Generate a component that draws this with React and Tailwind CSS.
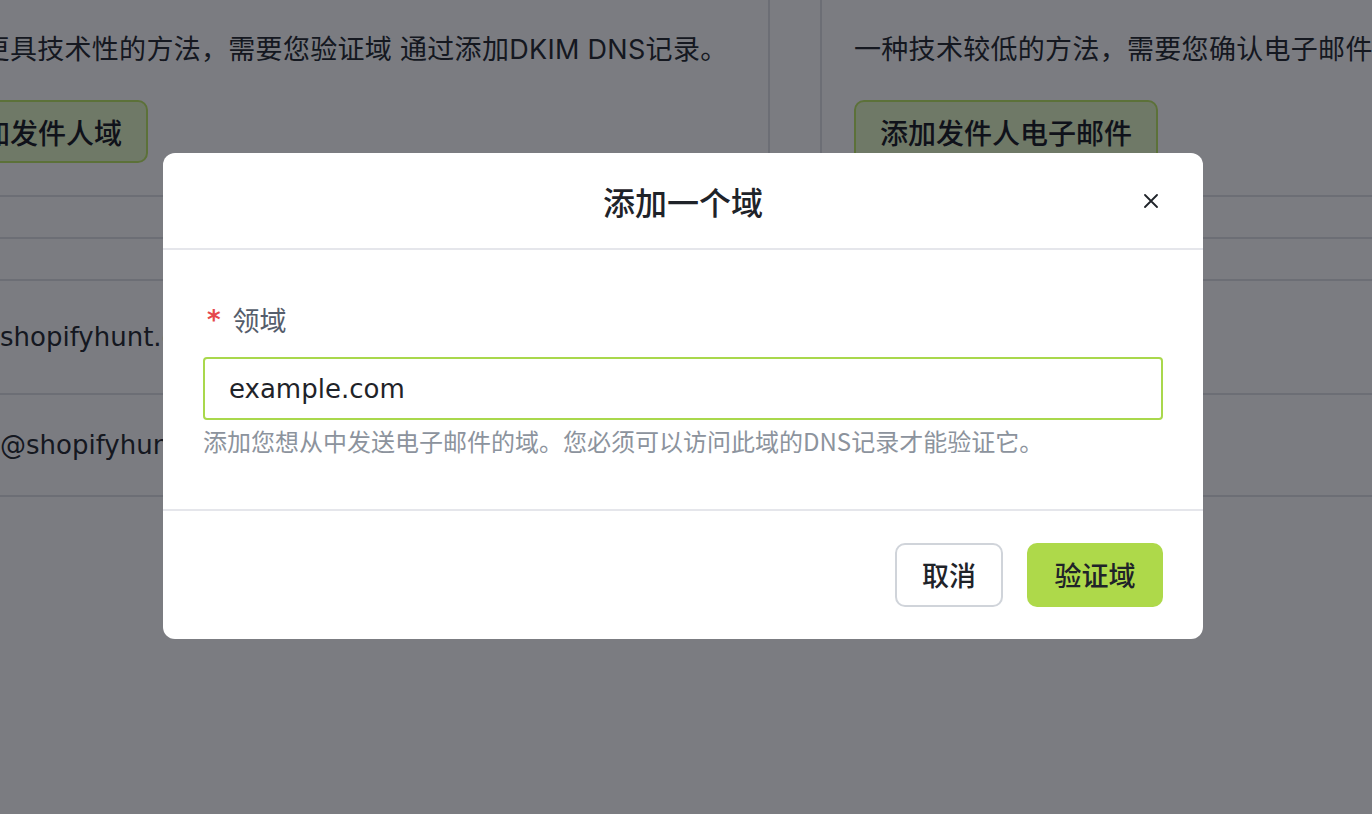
import React from "react";

const CJK = { fontFamily: '"Noto Sans CJK SC", "Inter", sans-serif' };
const PAGE = { fontFamily: '"Inter", "Noto Sans CJK SC", sans-serif' };
const LATIN = { fontFamily: '"DejaVu Sans", "Noto Sans CJK SC", sans-serif' };

// carte d'arrière-plan (méthode d'envoi)
const MethodCard = ({ text, button }) => (
  <div className="w-[876px] shrink-0 border-2 border-t-0 border-[#dfe1e6] px-[32px] pt-[30px] pb-[32px]">
    <p className="text-[27px] leading-[40px] text-[#2b2f36] whitespace-nowrap tracking-[0.3px]" style={PAGE}>
      {text}
    </p>
    <button className="mt-[30px] h-[63px] px-[24px] rounded-[10px] border-2 border-[#bfe86a] bg-[#e7f9c9] text-[28px] font-medium text-[#1f2329] whitespace-nowrap">
      {button}
    </button>
  </div>
);

const Row = ({ h, children }) => (
  <div className={`flex items-center border-b-2 border-[#dfe1e6] ${h}`}>{children}</div>
);

export default function App() {
  return (
    <div className="relative h-[814px] w-full overflow-hidden bg-white" style={CJK}>
      {/* page derrière la modale */}
      <div className="-ml-[106px] flex gap-[50px]">
        <MethodCard
          text="一种更具技术性的方法，需要您验证域 通过添加DKIM DNS记录。"
          button="添加发件人域"
        />
        <MethodCard
          text="一种技术较低的方法，需要您确认电子邮件地址的所有权。"
          button="添加发件人电子邮件"
        />
      </div>
      <div className="flex flex-col">
        <Row h="h-[42px]" />
        <Row h="h-[42px]" />
        <Row h="h-[114px]">
          <span className="text-[26px] text-[#2b2f36]" style={LATIN}>shopifyhunt.com</span>
        </Row>
        <Row h="h-[102px]">
          <span className="text-[26px] text-[#2b2f36]" style={LATIN}>@shopifyhunt.com</span>
        </Row>
      </div>

      {/* overlay */}
      <div className="absolute inset-0 flex justify-center bg-[rgba(2,4,14,0.52)] pt-[153px] pr-[6px]">
        <div className="h-fit w-[1040px] rounded-[12px] bg-white">
          <div className="relative flex h-[97px] items-center justify-center border-b-2 border-[#e5e6eb]">
            <h2 className="text-[32px] font-medium text-[#1f2329]">添加一个域</h2>
            <button className="absolute right-[45px] top-[41px] text-[#1f2329]">
              <svg width="14" height="14" viewBox="0 0 14 14" fill="none" stroke="currentColor" strokeWidth="1.8" strokeLinecap="round">
                <path d="M1 1L13 13M13 1L1 13" />
              </svg>
            </button>
          </div>

          <div className="px-[40px] pt-[50px] pb-[53px]">
            <label className="flex items-center text-[27px] leading-[40px] text-[#555d6b]">
              <span className="ml-[4px] mr-[12px] text-[26px] leading-[26px] font-bold text-[#e5484d]" style={LATIN}>*</span>
              领域
            </label>
            <div className="mt-[17px] flex h-[63px] items-center rounded-[4px] border-2 border-[#a9d84c] px-[24px]">
              <span className="text-[26px] leading-[32px] text-[#1f2329]" style={LATIN}>example.com</span>
            </div>
            <p className="mt-[6px] text-[24px] leading-[30px] text-[#8c939d]">
              添加您想从中发送电子邮件的域。您必须可以访问此域的DNS记录才能验证它。
            </p>
          </div>

          <div className="flex justify-end gap-[24px] border-t-2 border-[#e5e6eb] px-[40px] pt-[32px] pb-[32px]">
            <button className="h-[64px] w-[108px] rounded-[10px] border-2 border-[#d0d4da] bg-white text-[27px] font-medium text-[#1f2329]">
              取消
            </button>
            <button className="h-[64px] w-[136px] rounded-[10px] bg-[#aed94a] text-[27px] font-medium text-[#1f2329]">
              验证域
            </button>
          </div>
        </div>
      </div>
    </div>
  );
}
